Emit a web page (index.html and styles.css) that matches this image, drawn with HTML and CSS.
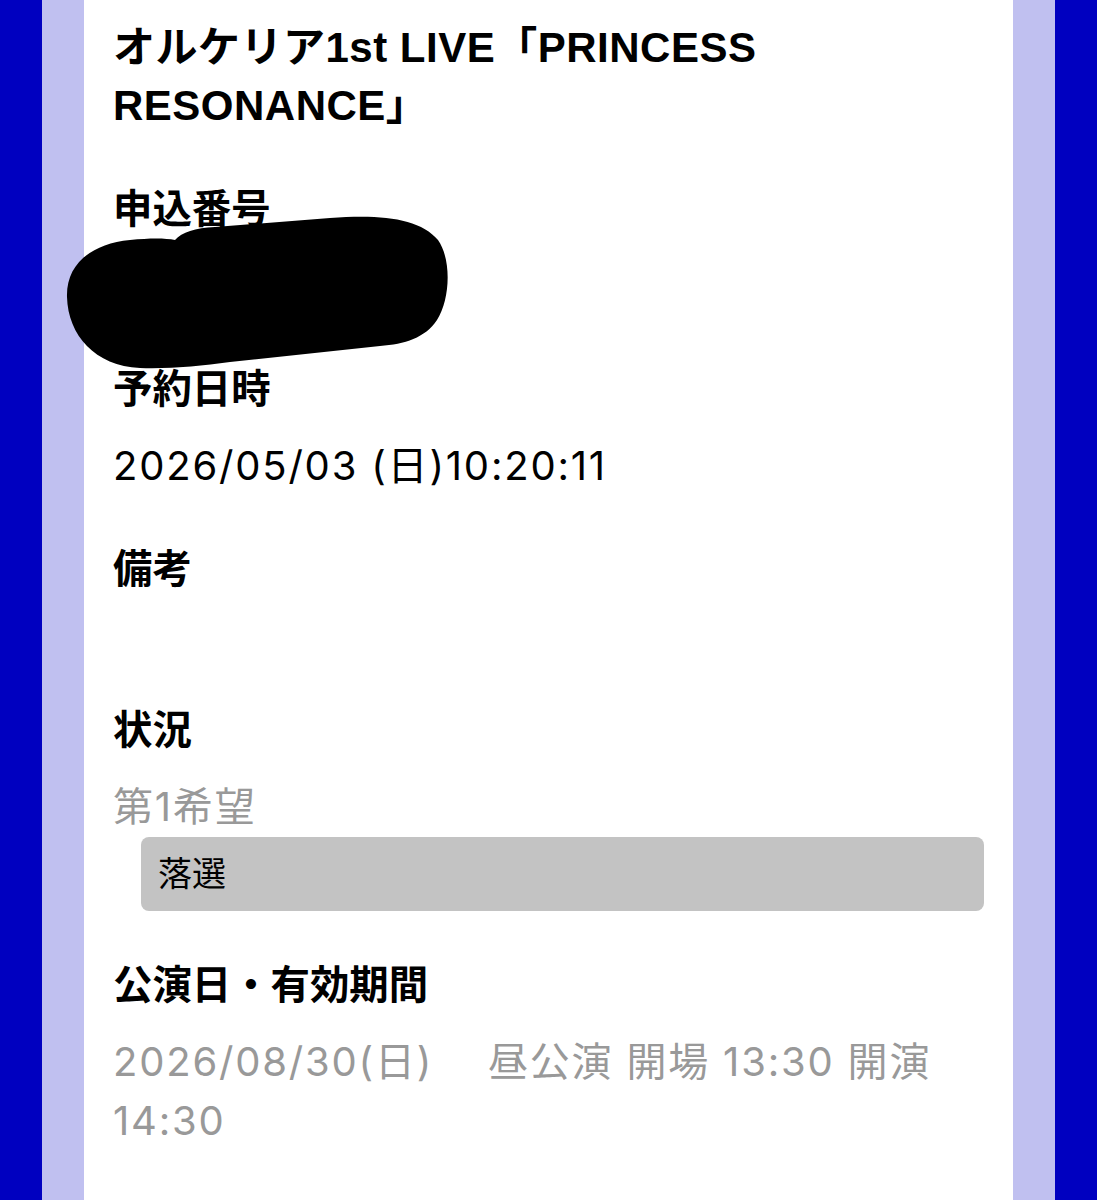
FILE: index.html
```html
<!DOCTYPE html>
<html lang="ja">
<head>
  <meta charset="UTF-8">
  <meta name="viewport" content="width=device-width, initial-scale=1.0">
  <title>申込詳細</title>
  <link rel="stylesheet" href="styles.css">
</head>
<body>
  <div class="outer">
    <div class="inner">
      <div class="card">
        <h1 class="title">オルケリア1st LIVE「PRINCESS RESONANCE」</h1>

        <div class="section">
          <div class="label">申込番号</div>
          <div class="value"></div>
          <svg class="redact" viewBox="60 210 400 165" width="400" height="165">
            <path d="M67,297 C66,265 90,244 130,240 C150,238 165,238 175,240 C182,232 195,228 215,227 L330,218 C380,214 420,218 438,240 C452,260 450,300 437,320 C425,338 405,344 380,346 L230,362 C200,366 170,369 140,368 C95,366 68,335 67,297 Z" fill="#000"/>
          </svg>
        </div>

        <div class="section">
          <div class="label">予約日時</div>
          <div class="value">2026/05/03 (日)10:20:11</div>
        </div>

        <div class="section">
          <div class="label">備考</div>
          <div class="value empty"></div>
        </div>

        <div class="section">
          <div class="label">状況</div>
          <div class="value muted">第1希望</div>
          <div class="result">落選</div>
        </div>

        <div class="section">
          <div class="label">公演日・有効期間</div>
          <div class="value muted">2026/08/30(日)&emsp; 昼公演 開場 13:30 開演 14:30</div>
        </div>
      </div>
    </div>
  </div>
</body>
</html>
```

FILE: styles.css
```css
html,
body {
  height: 100%;
}

body {
  margin: 0;
  font-family: "Liberation Sans", "Noto Sans CJK JP", sans-serif;
  font-size: 39.4px;
  line-height: 59px;
  color: #000;
  background: #0000c0;
}

.outer {
  min-height: 100%;
  padding: 0 42px;
  box-sizing: border-box;
  display: flex;
}

.inner {
  flex: 1;
  display: flex;
  padding: 0 42px;
  background: #c0c0f0;
}

.card {
  flex: 1;
  background: #fff;
  padding: 19px 29px 0 29px;
}

.title {
  margin: 0 0 45px;
  font-size: 42px;
  line-height: 58px;
  font-weight: bold;
  letter-spacing: 0.5px;
}

.section {
  position: relative;
  margin-bottom: 45px;
}

.label {
  font-weight: bold;
}

.value {
  margin-top: 17px;
  min-height: 59px;
  font-family: "Inter", "Noto Sans CJK JP", sans-serif;
  font-size: 40px;
  letter-spacing: 1.8px;
}

.value.empty {
  min-height: 40px;
}

.muted {
  color: #999;
}

.result {
  margin: 1px 0 0 28px;
  height: 74px;
  padding-left: 17px;
  display: flex;
  align-items: center;
  background: #c3c3c3;
  border-radius: 8px;
  font-size: 34px;
}

.redact {
  position: absolute;
  left: -53px;
  top: 30px;
}
```
